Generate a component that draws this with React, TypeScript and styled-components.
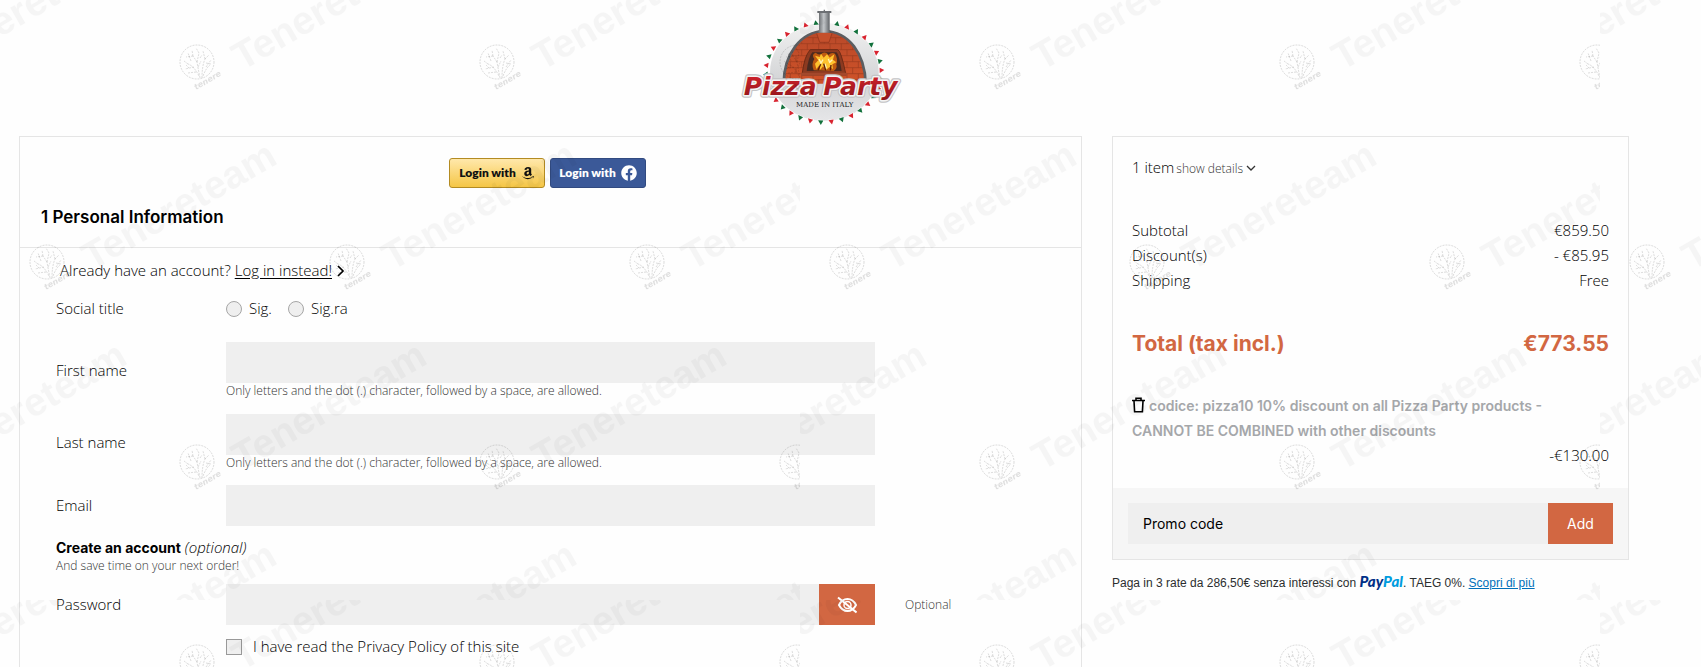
import React, { useState } from 'react';
import styled, { createGlobalStyle } from 'styled-components';
import { FaAmazon, FaFacebook } from 'react-icons/fa';

const light = '"Open Sans", "Liberation Sans", sans-serif';
const strong = 'Inter, "Liberation Sans", sans-serif';
const orange = '#d26742';
const line = '#e5e5e5';

const GlobalStyle = createGlobalStyle`
  *, *::before, *::after { box-sizing: border-box; }
  html { background: #fefefe; }
  body {
    margin: 0;
    color: #000;
    font: 350 15px/25px ${light};
  }
  button, input { font: inherit; color: inherit; border: 0; border-radius: 0; }
  button { cursor: pointer; }
`;

const Page = styled.div`
  position: relative;
  min-height: 100vh;
  padding: 0 72px 0 19px;
  overflow: hidden;
`;

const Header = styled.header`
  display: flex;
  justify-content: center;
  padding: 7px 0 9px;
`;

const LogoSvg = styled.svg`
  display: block;
  width: 170px;
  height: 120px;
`;

const Columns = styled.div`
  display: grid;
  grid-template-columns: minmax(0, 1063fr) minmax(0, 517fr);
  gap: 30px;
  align-items: start;
`;

const Panel = styled.section`
  border: 1px solid ${line};
`;

const SocialRow = styled.div`
  display: flex;
  justify-content: center;
  gap: 5px;
  padding: 21px 6px 0 0;
`;

const SocialButton = styled.button<{ $kind: 'amazon' | 'facebook' }>`
  display: flex;
  align-items: center;
  justify-content: center;
  gap: 5px;
  width: 96px;
  height: 30px;
  padding: 0;
  border: 1px solid ${p => (p.$kind === 'amazon' ? '#b38b22' : '#314a80')};
  border-radius: 3px;
  background: ${p => (p.$kind === 'amazon' ? 'linear-gradient(#ffe8ab, #f5c646)' : '#3b5998')};
  color: ${p => (p.$kind === 'amazon' ? '#111' : '#fff')};
  font: 800 12px/16px Lato, "Liberation Sans", sans-serif;
  white-space: nowrap;
`;

const SectionTitle = styled.h1`
  margin: 0;
  padding: 17px 21px 18px;
  border-bottom: 1px solid ${line};
  font: 600 17px/24px ${strong};
`;

const LoginHint = styled.p`
  display: flex;
  align-items: center;
  margin: 0;
  padding: 10px 0 0 40px;
  svg { margin-left: 5px; }
`;

const TextLink = styled.a`
  margin-left: 4px;
  color: inherit;
  text-underline-offset: 2px;
`;

const Form = styled.form`
  padding: 13px 37px 0 36px;
`;

const FieldRow = styled.div<{ $after: number }>`
  display: grid;
  grid-template-columns: 170px minmax(0, 1fr) 169px;
  align-items: center;
  margin-bottom: ${p => p.$after}px;
`;

const FieldLabel = styled.label``;

const TextBox = styled.input`
  display: block;
  flex: 1;
  width: 100%;
  min-width: 0;
  height: 41px;
  padding: 0 15px;
  background: #efefef;
  outline: none;
`;

const Help = styled.small`
  display: block;
  color: #333;
  font-size: 12px;
  line-height: 16px;
`;

const Comment = styled(Help)`
  padding-left: 30px;
`;

const ChoiceGroup = styled.div`
  display: flex;
  gap: 16px;
`;

const Choice = styled.label`
  display: flex;
  align-items: center;
  gap: 7px;
`;

const Radio = styled.input`
  appearance: none;
  width: 16px;
  height: 16px;
  margin: 0;
  border: 1px solid #a6a6a6;
  border-radius: 50%;
  background: #efefef;
  &:checked { box-shadow: inset 0 0 0 4px #efefef; background: ${orange}; }
`;

const CheckBox = styled.input`
  appearance: none;
  width: 16px;
  height: 16px;
  margin: 0 4px 0 0;
  border: 1px solid #999;
  background: #efefef;
  &:checked { box-shadow: inset 0 0 0 3px #efefef; background: ${orange}; }
`;

const Account = styled.div`
  margin-bottom: 10px;
  line-height: 20px;
  b { font: 700 14px/20px ${strong}; }
`;

const Joined = styled.div`
  display: flex;
`;

const ActionButton = styled.button<{ $width: number }>`
  display: flex;
  align-items: center;
  justify-content: center;
  width: ${p => p.$width}px;
  height: 41px;
  padding: 0;
  background: ${orange};
  color: #fff;
  font: 400 14px/20px ${strong};
`;

const Summary = styled.div`
  display: flex;
  flex-direction: column;
  padding: 18px 19px 20px;
`;

const ItemLine = styled.div`
  display: flex;
  align-items: baseline;
  margin-bottom: 37px;
`;

const DetailsButton = styled.button`
  display: flex;
  align-items: center;
  gap: 3px;
  padding: 0;
  margin-left: 2px;
  background: none;
  color: #333;
  font-size: 12px;
`;

const SumLine = styled.div`
  display: flex;
  justify-content: space-between;
`;

const TotalLine = styled(SumLine)`
  margin: 36px 0 34px;
  color: ${orange};
  font: 700 21px/30px ${strong};
`;

const Voucher = styled.p`
  max-width: 430px;
  margin: 0;
  color: #a5a7aa;
  font: 600 14px/25px ${strong};
`;

const TrashButton = styled.button`
  padding: 0;
  margin-right: 4px;
  background: none;
  color: #000;
  vertical-align: -2px;
  line-height: 0;
`;

const VoucherValue = styled.div`
  text-align: right;
`;

const PromoBar = styled.form`
  display: flex;
  padding: 15px;
  background: #f6f6f6;
  ${TextBox} { font: 400 14px/20px ${strong}; }
  ${TextBox}::placeholder { color: #000; opacity: 1; }
`;

const PayLater = styled.p`
  margin: 12px 0 0;
  color: #2c2e2f;
  font: 400 12px/18px "Liberation Sans", Arial, sans-serif;
  a { color: #0070ba; }
`;

const PayPal = styled.span`
  color: #003087;
  font: italic 900 15px/18px Lato, sans-serif;
  span { color: #009cde; }
`;

const WatermarkSvg = styled.svg`
  position: absolute;
  inset: 0;
  width: 100%;
  height: 100%;
  pointer-events: none;
`;

function brickRows() {
  const rows: string[] = [];
  for (let r = 0; r < 8; r++) {
    const y = 112 + r * 18;
    rows.push(`M190 ${y}H444`);
    for (let x = 180 + (r % 2) * 17; x < 450; x += 34) rows.push(`M${x} ${y}v18`);
  }
  return rows.join('');
}

function Wordmark({ stroke, width }: { stroke: string; width: number }) {
  return (
    <g
      fontFamily="DejaVu Sans, sans-serif" fontWeight="700" fontStyle="italic" fontSize="75"
      fill="url(#word)" stroke={stroke} strokeWidth={width} strokeLinejoin="round" paintOrder="stroke"
    >
      <text x="74" y="283">Pizza</text>
      <text x="313" y="283">Party</text>
    </g>
  );
}

function Logo() {
  return (
    <LogoSvg viewBox="60 20 510 360" role="img" aria-label="Pizza Party">
      <defs>
        <linearGradient id="disc" x1="0" y1="0" x2="0" y2="1">
          <stop offset="0" stopColor="#f1f1f1" />
          <stop offset=".6" stopColor="#d3d4d6" />
          <stop offset="1" stopColor="#e6e6e8" />
        </linearGradient>
        <linearGradient id="pipe">
          <stop offset="0" stopColor="#55585c" />
          <stop offset=".45" stopColor="#c3c6c9" />
          <stop offset="1" stopColor="#3d4044" />
        </linearGradient>
        <linearGradient id="brick" x1="0" y1="0" x2="0" y2="1">
          <stop offset="0" stopColor="#b8492a" />
          <stop offset="1" stopColor="#cf5228" />
        </linearGradient>
        <linearGradient id="word" x1="0" y1="0" x2="0" y2="1">
          <stop offset=".2" stopColor="#c9202a" />
          <stop offset="1" stopColor="#8c1519" />
        </linearGradient>
        <clipPath id="dome">
          <path d="M198 250C200 165 250 97 316 96C385 97 432 165 436 250Z" />
        </clipPath>
      </defs>
      <ellipse cx="316" cy="215" rx="163" ry="147" fill="url(#disc)" />
      {Array.from({ length: 34 }, (_, i) => {
        const a = ((i * 360) / 34 + 93) * (Math.PI / 180);
        const x = 314 + 174 * Math.cos(a);
        const y = 216 + 150 * Math.sin(a);
        const deg = (a * 180) / Math.PI - 90;
        return (
          <path
            key={i}
            d="M-8-6H8L1 8Z"
            transform={`translate(${x.toFixed(1)} ${y.toFixed(1)}) rotate(${deg.toFixed(0)})`}
            fill={i % 2 ? '#d8232f' : '#12713c'}
            stroke="#fff"
            strokeWidth="3"
            paintOrder="stroke"
          />
        );
      })}
      <path d="M194 250C195 160 245 94 316 92C390 94 438 160 440 250" fill="url(#brick)" stroke="#5b5e62" strokeWidth="8" />
      <g clipPath="url(#dome)">
        <path d={brickRows()} stroke="#9c3c1f" strokeWidth="2" fill="none" />
        <path d="M292 96H340L330 126H302Z" fill="#c5502c" stroke="#8d3419" strokeWidth="2" />
      </g>
      <path d="M274 148H356Q366 150 381 224H249Q256 165 274 148Z" fill="#8c3a20" stroke="#6e2a15" strokeWidth="3" />
      <path d="M280 156H352Q360 160 368 212H263Q268 170 280 156Z" fill="#4a2a20" />
      <path d="M284 210Q276 190 286 176Q276 162 290 157Q304 168 310 158Q322 154 328 164Q338 154 348 160Q358 176 352 192Q356 204 344 212Z" fill="#c05a10" />
      <path d="M292 206L288 190L298 180L288 166L302 170L306 160L314 172L324 162L332 172L346 162L342 178L352 186L340 192L342 206L332 200L322 208L312 198L304 208L300 196Z" fill="#ffc22e" />
      <path d="M300 176l6 12 6-10M328 176l4 10 8-8M318 190l4 14" stroke="#fff3b8" strokeWidth="4" fill="none" />
      <path d="M297 210l8-18M320 210l-6-20M334 210l2-16" stroke="#5a1c08" strokeWidth="4" fill="none" />
      <path d="M246 217H384V226H246Z" fill="#a3482b" />
      <path d="M300 36H332V90L338 97H295L300 90Z" fill="url(#pipe)" />
      <path d="M295 32H337V38H295ZM314 28H318V33H314Z" fill="#6d7074" />
      <g aria-hidden="true">
        <Wordmark stroke="#c4c4c6" width={16} />
      </g>
      <Wordmark stroke="#f4f4f4" width={9} />
      <text x="317" y="320" textAnchor="middle" fontFamily="DejaVu Serif, serif" fontSize="21" fill="#222">
        MADE IN ITALY
      </text>
    </LogoSvg>
  );
}

function Watermark() {
  const marks: [number, number][] = [];
  [62, 262, 462, 662].forEach((y, row) => {
    for (let k = -1; k < 3; k++) marks.push([(row % 2 ? 47 : 197) + 300 * k, y]);
  });
  return (
    <WatermarkSvg aria-hidden="true">
      <defs>
        <g id="mark">
          <g fill="none" stroke="#000" strokeOpacity=".13" strokeDasharray="2 1">
            <circle r="17" />
            <path d="M3 16Q1 6 0 0M5 16Q5 4 8 -3M2 14Q-3 4 -9 2M6 14Q9 6 13 3M0 0L-4 -6M0 0L2 -9M-3 5L-12 7M8 -3L12 -7M8 -3L6 -11M-4 -6L-11 -5M-4 -6L-5 -12M9 5L14 -2M-9 2L-13 -1M2 -9L-1 -14M-1 10L-9 11M-6 -1L-9 -9M3 -4L5 -7M9 1L14 2M-8 6L-11 3M1 5L4 -1" />
          </g>
          <text transform="translate(-1 28) rotate(-30)" fontFamily="DejaVu Sans" fontWeight="700" fontStyle="italic" fontSize="8" fillOpacity=".12">
            tenere
          </text>
          <text transform="translate(45 9) rotate(-30)" fontFamily="Liberation Sans" fontWeight="700" fontSize="39" fillOpacity=".036">
            Tenereteam
          </text>
        </g>
        <pattern id="tile" width="800" height="600" patternUnits="userSpaceOnUse">
          {marks.map(([x, y]) => (
            <use key={`${x}-${y}`} href="#mark" x={x} y={y} />
          ))}
        </pattern>
      </defs>
      <rect width="100%" height="100%" fill="url(#tile)" />
    </WatermarkSvg>
  );
}

function EyeOffIcon() {
  return (
    <svg width="20" height="18" viewBox="0 0 20 18" fill="none" stroke="currentColor" strokeWidth="2">
      <path d="M2 9Q5 3 10.500 3T19 9Q16 15 10.500 15T2 9Z" />
      <circle cx="10.500" cy="9" r="3.500" strokeWidth="1.500" />
      <path d="M1 1.500L19.500 16.500" />
    </svg>
  );
}

function TrashIcon() {
  return (
    <svg width="13" height="16" viewBox="0 0 13 16" fill="none" stroke="currentColor" strokeWidth="1.600">
      <path d="M0 3.500H13M4 3V1.300H9V3M2 4L2.600 14.800H10.400L11 4" />
    </svg>
  );
}

function Chevron({ dir }: { dir: 'right' | 'down' }) {
  return dir === 'right' ? (
    <svg width="8" height="12" viewBox="0 0 8 12" fill="none" stroke="currentColor" strokeWidth="1.700">
      <path d="M1 1L6 6L1 11" />
    </svg>
  ) : (
    <svg width="10" height="7" viewBox="0 0 10 7" fill="none" stroke="currentColor" strokeWidth="1.300">
      <path d="M1 1L5 5L9 1" />
    </svg>
  );
}

const nameRule = 'Only letters and the dot (.) character, followed by a space, are allowed.';

const totals = [
  ['Subtotal', '€859.50'],
  ['Discount(s)', '- €85.95'],
  ['Shipping', 'Free'],
];

export default function App() {
  const [shown, setShown] = useState(false);
  return (
    <Page>
      <GlobalStyle />
      <Header>
        <Logo />
      </Header>
      <Columns>
        <Panel>
          <SocialRow>
            <SocialButton type="button" $kind="amazon">
              Login with <FaAmazon size={14} />
            </SocialButton>
            <SocialButton type="button" $kind="facebook">
              Login with <FaFacebook size={16} />
            </SocialButton>
          </SocialRow>
          <SectionTitle>1 Personal Information</SectionTitle>
          <LoginHint>
            Already have an account? <TextLink href="#login">Log in instead!</TextLink>
            <Chevron dir="right" />
          </LoginHint>
          <Form>
            <FieldRow $after={21}>
              <span id="social-title">Social title</span>
              <ChoiceGroup role="radiogroup" aria-labelledby="social-title">
                <Choice>
                  <Radio type="radio" name="title" value="sig" /> Sig.
                </Choice>
                <Choice>
                  <Radio type="radio" name="title" value="sigra" /> Sig.ra
                </Choice>
              </ChoiceGroup>
            </FieldRow>
            <FieldRow $after={15}>
              <FieldLabel htmlFor="first">First name</FieldLabel>
              <div>
                <TextBox id="first" type="text" />
                <Help>{nameRule}</Help>
              </div>
            </FieldRow>
            <FieldRow $after={14}>
              <FieldLabel htmlFor="last">Last name</FieldLabel>
              <div>
                <TextBox id="last" type="text" />
                <Help>{nameRule}</Help>
              </div>
            </FieldRow>
            <FieldRow $after={11}>
              <FieldLabel htmlFor="email">Email</FieldLabel>
              <TextBox id="email" type="email" />
            </FieldRow>
            <Account>
              <b>Create an account</b> <i>(optional)</i>
              <Help>And save time on your next order!</Help>
            </Account>
            <FieldRow $after={9}>
              <FieldLabel htmlFor="password">Password</FieldLabel>
              <Joined>
                <TextBox id="password" type={shown ? 'text' : 'password'} />
                <ActionButton type="button" $width={56} aria-label="Show password" onClick={() => setShown(!shown)}>
                  <EyeOffIcon />
                </ActionButton>
              </Joined>
              <Comment>Optional</Comment>
            </FieldRow>
            <FieldRow $after={10}>
              <span />
              <Choice>
                <CheckBox type="checkbox" /> I have read the Privacy Policy of this site
              </Choice>
            </FieldRow>
          </Form>
        </Panel>
        <aside>
          <Panel>
            <Summary>
              <ItemLine>
                1 item
                <DetailsButton type="button">
                  show details <Chevron dir="down" />
                </DetailsButton>
              </ItemLine>
              {totals.map(([name, value]) => (
                <SumLine key={name}>
                  <span>{name}</span>
                  <span>{value}</span>
                </SumLine>
              ))}
              <TotalLine>
                <span>Total (tax incl.)</span>
                <span>€773.55</span>
              </TotalLine>
              <Voucher>
                <TrashButton type="button" aria-label="Remove discount">
                  <TrashIcon />
                </TrashButton>
                codice: pizza10 10% discount on all Pizza Party products - CANNOT BE COMBINED with other discounts
              </Voucher>
              <VoucherValue>-€130.00</VoucherValue>
            </Summary>
            <PromoBar onSubmit={e => e.preventDefault()}>
              <TextBox type="text" placeholder="Promo code" aria-label="Promo code" />
              <ActionButton type="submit" $width={65}>
                Add
              </ActionButton>
            </PromoBar>
          </Panel>
          <PayLater>
            Paga in 3 rate da 286,50€ senza interessi con{' '}
            <PayPal>
              Pay<span>Pal</span>
            </PayPal>
            . TAEG 0%. <a href="#paypal">Scopri di più</a>
          </PayLater>
        </aside>
      </Columns>
      <Watermark />
    </Page>
  );
}
